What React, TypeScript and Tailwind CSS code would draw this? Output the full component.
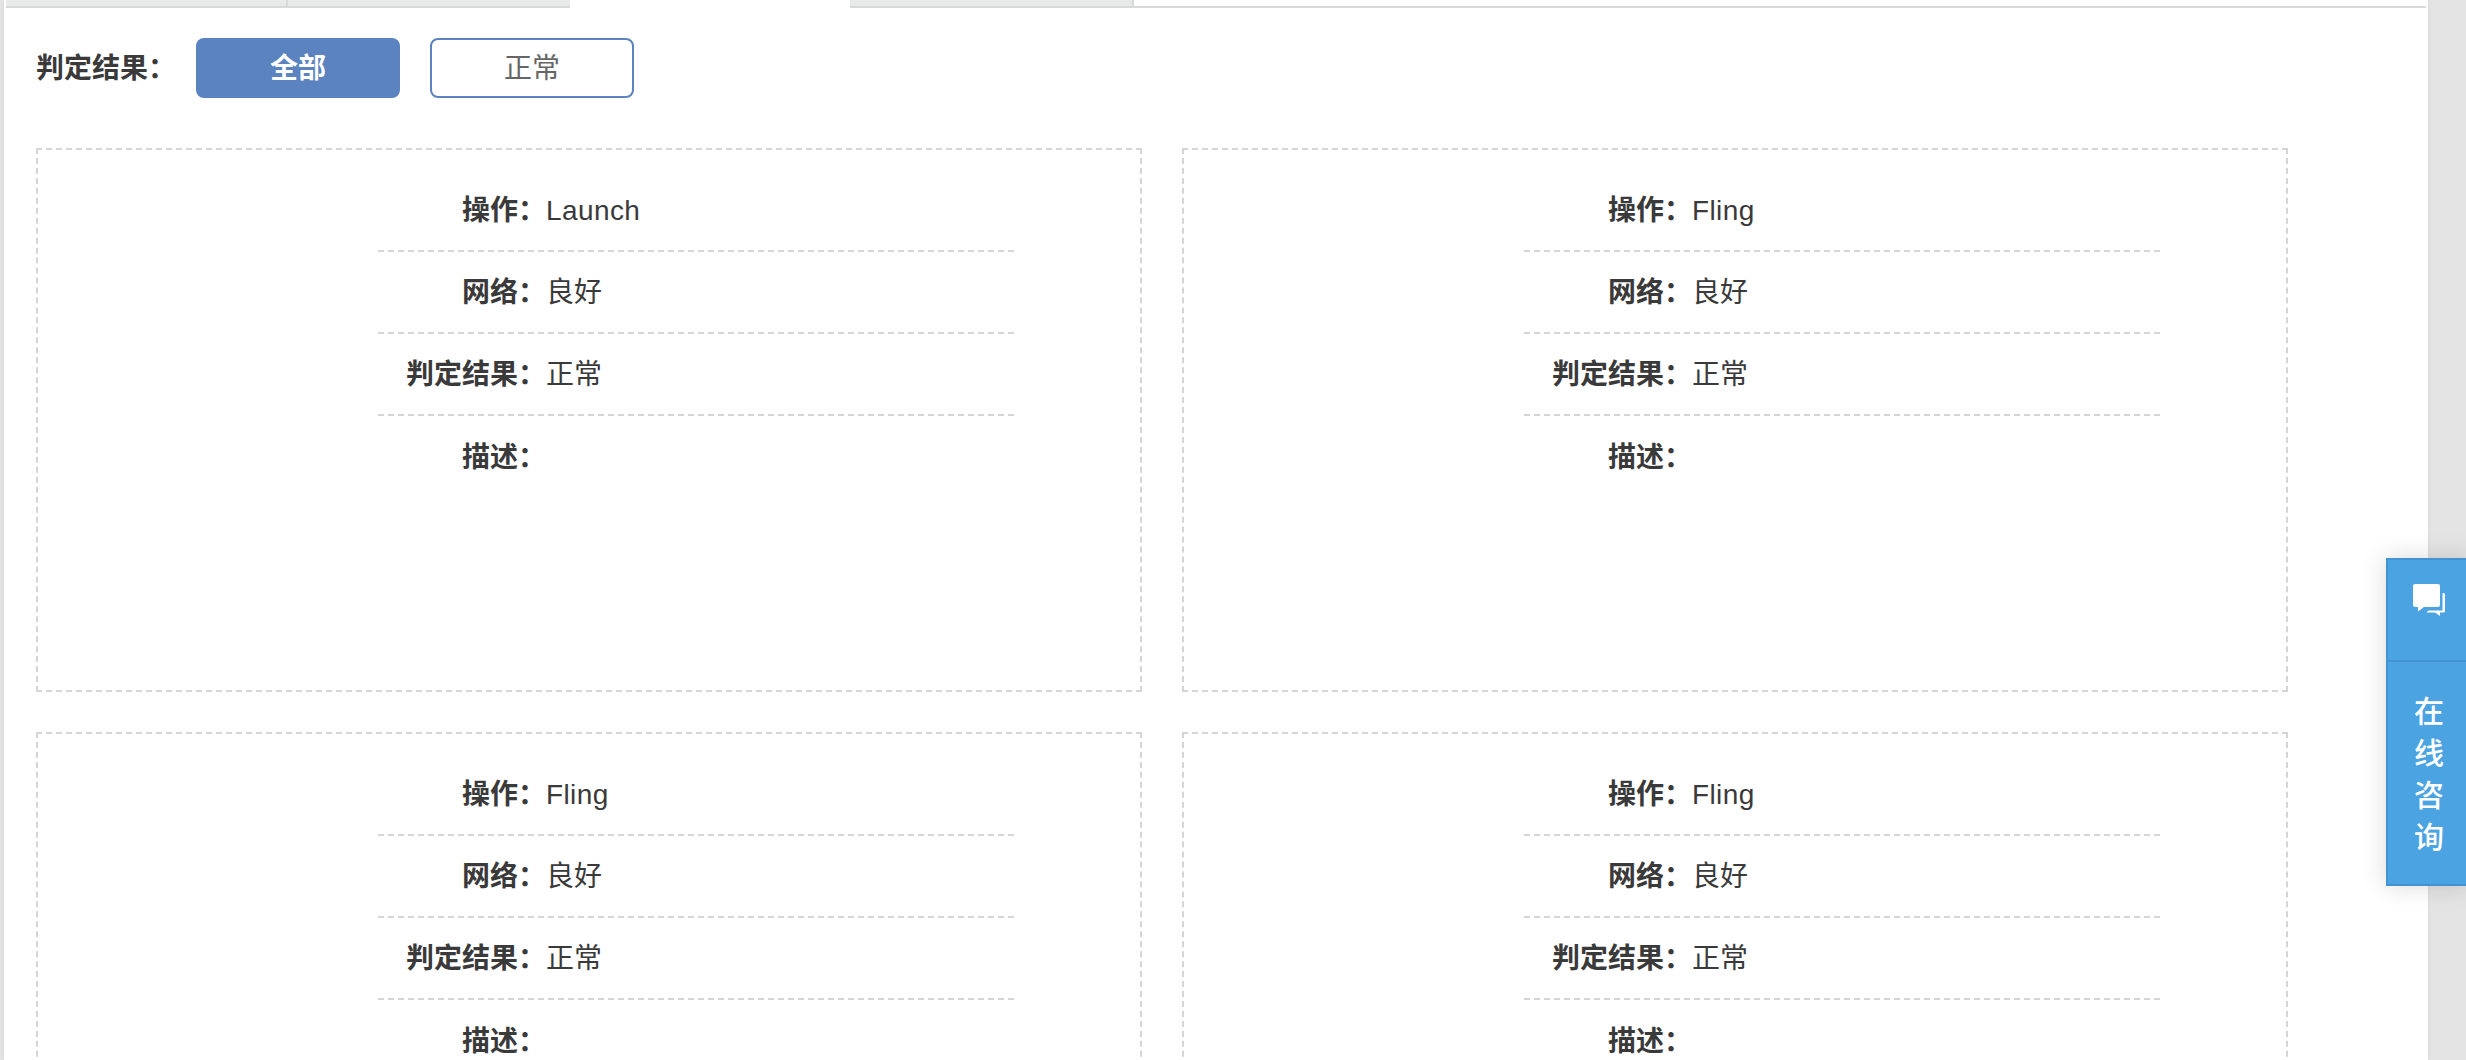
const font = "font-['Liberation_Sans','Noto_Sans_CJK_SC',sans-serif]";

const cards = [
  { op: "Launch" },
  { op: "Fling" },
  { op: "Fling" },
  { op: "Fling" },
];

function Row({ label, value, line = true, latin = false }: { label: string; value?: string; line?: boolean; latin?: boolean }) {
  return (
    <div className={`flex h-[82px] items-center pt-[2px] ${line ? "border-b-2 border-dashed border-[#d5d5d5]" : ""}`}>
      <span className="w-[168px] shrink-0 text-right font-semibold">{label}：</span>
      <span className={latin ? "tracking-[0.4px]" : ""}>{value}</span>
    </div>
  );
}

function ResultCard({ op }: { op: string }) {
  return (
    <div className="h-[544px] border-2 border-dashed border-[#d5d5d5] pt-[20px] pl-[340px]">
      <div className="w-[636px]">
        <Row label="操作" value={op} latin />
        <Row label="网络" value="良好" />
        <Row label="判定结果" value="正常" />
        <Row label="描述" line={false} />
      </div>
    </div>
  );
}

function ChatIcon() {
  return (
    <svg viewBox="0 0 32 33" className="h-[33px] w-[32px]" fill="#fff">
      <path d="M2 1h23a2 2 0 0 1 2 2v19a2 2 0 0 1-2 2H11l-6 4.500V24H2a2 2 0 0 1-2-2V3a2 2 0 0 1 2-2z" />
      <path d="M29.500 10h1a1.500 1.500 0 0 1 1.500 1.500v16.500a1.500 1.500 0 0 1-1.500 1.500H27V33l-5-3.500h-8.500l2-2H29.500z" />
    </svg>
  );
}

export default function App() {
  return (
    <div className={`relative h-[1060px] w-full overflow-hidden bg-[#e4e4e4] pl-[4px] text-[28px] leading-none text-[#3a3a3a] ${font}`}>
      <div className="h-full w-[2424px] bg-white shadow-[0_0_3px_rgba(0,0,0,0.08)]">
        <div className="flex h-[8px] w-[2422px] pl-[2px]">
          <div className="h-full w-[282px] border-r-2 border-b-2 border-[#d9d9d9] bg-[#e8e9e9]" />
          <div className="h-full w-[282px] border-b-2 border-[#d9d9d9] bg-[#e8e9e9]" />
          <div className="h-full w-[280px] bg-white" />
          <div className="h-full w-[284px] border-r-2 border-b-2 border-[#d9d9d9] bg-[#e8e9e9]" />
          <div className="h-full flex-1 border-b-2 border-[#d9d9d9]" />
        </div>

        <div className="mt-[30px] flex h-[60px] items-center pl-[32px]">
          <span className="w-[160px] pt-[2px] font-semibold">判定结果：</span>
          <button className="h-[60px] w-[204px] rounded-lg bg-[#5a83c0] pt-[2px] font-semibold text-white">全部</button>
          <button className="ml-[30px] h-[60px] w-[204px] rounded-lg border-2 border-[#5a83c0] bg-white pt-[2px] text-[#666]">正常</button>
        </div>

        <div className="mt-[50px] grid w-[2284px] grid-cols-2 gap-x-[40px] gap-y-[40px] pl-[32px]">
          {cards.map((c, i) => (
            <ResultCard key={i} op={c.op} />
          ))}
        </div>
      </div>

      <div className="absolute top-[558px] right-[-6px] w-[86px] border-2 border-[#4393d3] bg-[#4ca3e2] text-white shadow-[0_0_24px_rgba(0,0,0,0.15)]">
        <div className="flex h-[102px] items-start justify-center border-b-2 border-[#4393d3] pt-[23px]">
          <ChatIcon />
        </div>
        <div className="flex h-[222px] flex-col items-center pt-[29px] text-[30px] font-medium leading-[42px]">
          <span>在</span>
          <span>线</span>
          <span>咨</span>
          <span>询</span>
        </div>
      </div>
    </div>
  );
}
